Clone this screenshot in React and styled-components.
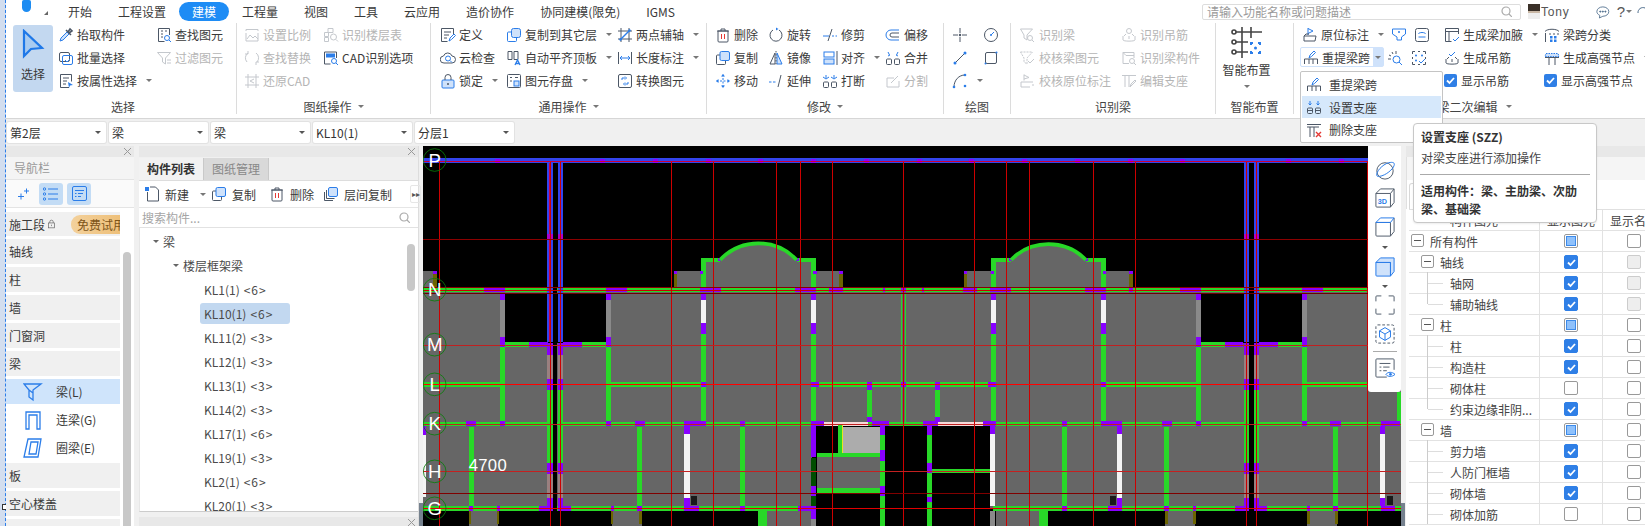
import React from "react";
import styled, { createGlobalStyle } from "styled-components";

const GlobalStyle = createGlobalStyle`
  html, body { margin: 0; padding: 0; background: #f0f0f0; overflow: hidden; }
  body { font-family: "Noto Sans CJK SC", "Liberation Sans", sans-serif; font-size: 12px; color: #3a3a3a; }
  * { box-sizing: border-box; }
`;

/* ---------- icons ---------- */
const Glyph = styled.svg`
  flex: none;
  fill: none;
  stroke: #4c5766;
  stroke-width: 1;
  opacity: ${(p) => (p.$off ? 0.32 : 1)};
  .b { stroke: #2b7de9; }
  .f { stroke: #2b7de9; fill: #cfe2fb; }
  .s { stroke: none; fill: #2b7de9; }
  .d { stroke: none; fill: #4c5766; }
  .r { stroke: #e53935; }
`;

const ICONS = {
  pick: <><path d="M2 14l1-3 6-6 2 2-6 6z" className="f" /><path d="M8 3l5 5M10 5l2-3 2 2-3 2" strokeWidth="1.6" /></>,
  batch: <><rect x="1.5" y="2.5" width="10" height="9" rx="1.5" /><rect x="4.5" y="5.5" width="10" height="9" rx="1.5" className="b" /><path d="M7 10l2 2 3-3" className="b" /></>,
  attr: <><path d="M11 14.5H2.5v-13h11v7" /><path d="M5 5h6M5 8h4M5 11h3" /><path d="M10 9l5 3-3 .6-1 2.4z" className="s" /></>,
  find: <><path d="M13.5 8V1.5h-11v13h6" /><path d="M5 4h2M9 4h2M5 7h2M5 10h2" /><circle cx="11" cy="11" r="2.5" className="b" /><path d="M13 13l2 2" className="b" /></>,
  filter: <><path d="M1.5 2.5h13L9.5 8v6l-3-2V8z" /><path d="M11 10h4M11 13h4" /></>,
  scale: <><path d="M2 4V2.5h12V4M2 14h12M2 6v8M14 6v8" /><path d="M3 12l3-4 3 3 2-2 3 3" /></>,
  floor: <><path d="M5 1.5h5v4H5zM1.5 5.5h4v4h-4zM1.5 10.5h4v4h-4z" /><circle cx="10.5" cy="10" r="3" /><path d="M13 12.5l2 2" /></>,
  replace: <><path d="M4 3a6 6 0 0 0-1 9M12 3a6 6 0 0 1 1 9" /><path d="M4 1v3H1M12 15v-3h3" /></>,
  cad: <><path d="M13.5 8V2h-12v12h6" /><rect x="3" y="3.5" width="9" height="4" className="s" /><circle cx="11" cy="11" r="2.5" className="b" /><path d="M13 13l2 2" className="b" /></>,
  restore: <><path d="M1 4h14M1 12h14M4 1v14M12 1v14" /><path d="M10 6L6 8l4 2" /></>,
  define: <><path d="M13.5 7V1.5h-12v13h6" /><path d="M4 5h7M4 8h5M4 11h3" /><path d="M9 14l1-3 4-4 1.5 1.5-4 4z" className="b" /></>,
  cloud: <><path d="M4 13a3.5 3.5 0 0 1-.5-7 4.5 4.5 0 0 1 8.5 0 3.5 3.5 0 0 1 0 7z" /><circle cx="8" cy="8.5" r="2.5" className="b" /><path d="M10 10.5l2 2" className="b" /></>,
  lock: <><rect x="2" y="7" width="12" height="8" rx="1" className="f" /><path d="M5 7V4.5a3 3 0 0 1 6 0V7" /><circle cx="8" cy="11" r="1" className="d" /></>,
  layer: <><rect x="1.5" y="5" width="9" height="9.5" rx="1" className="b" /><rect x="5.5" y="1.5" width="9" height="9" rx="2" className="f" /></>,
  level: <><path d="M2 1.5h4v8H2zM8 1.5h4v8H8z" /><path d="M9 15l2.5-5 2.500 5M10 13.5h3" className="b" strokeWidth="1.3" /></>,
  save: <><rect x="1.5" y="1.5" width="13" height="13" rx="1" /><path d="M4 4.5h2M9 4.5h3M4 8h2" /><rect x="8" y="8" width="5" height="5" className="f" /></>,
  axis: <><path d="M1 4h14M1 12h14M4 1v14M12 1v14" /><path d="M3 13L13 3" className="b" strokeWidth="1.5" /><circle cx="3.5" cy="12.5" r="1.2" className="s" /><circle cx="12.5" cy="3.5" r="1.2" className="s" /></>,
  dim: <><path d="M1.5 2v12M14.5 2v12" /><path d="M3 8h10M3 8l2-2M3 8l2 2M13 8l-2-2M13 8l-2 2" className="b" /></>,
  convert: <><rect x="1.5" y="1.5" width="13" height="13" rx="1.5" /><path d="M5 7V5h3M8 3.5L9.5 5 8 6.5M11 9v2H8M8 9.5L6.5 11 8 12.5" className="b" /></>,
  trash: <><path d="M3 4h10v10a1 1 0 0 1-1 1H4a1 1 0 0 1-1-1zM2 4h12M6 4V2h4v2" /><path d="M6.5 7v5M9.5 7v5" className="r" /></>,
  copy: <><rect x="1.5" y="5" width="9" height="9.5" rx="1" /><rect x="5" y="1.5" width="9.5" height="9" rx="1.5" className="f" /></>,
  move: <><path d="M8 1.5v13M1.5 8h13" className="b" strokeDasharray="2 1.5" /><path d="M8 1l-2 2.5h4zM8 15l-2-2.5h4zM1 8l2.5-2v4zM15 8l-2.5-2v4z" className="s" /></>,
  rotate: <><path d="M11 3a6 6 0 1 1-6 0" /><path d="M8 .5v3l2.5-1.500z" className="s" /></>,
  mirror: <><path d="M7 3L2 14h5z" /><path d="M9 3l5 11H9z" className="f" /><path d="M8 1v14" strokeDasharray="1.5 1.5" /></>,
  extend: <><path d="M1 9h7" className="b" strokeDasharray="2.5 1.5" /><path d="M13 2L10 14" /></>,
  trim: <><path d="M1 9h6" className="b" /><path d="M10 9h5" className="b" strokeDasharray="2 1.5" /><path d="M10 2L6 14" /></>,
  alignB: <><rect x="2" y="2" width="10" height="5" className="b" /><rect x="2" y="9" width="10" height="5" className="f" /><path d="M15 1v14" /></>,
  breakB: <><rect x="1.5" y="9" width="5" height="5.5" rx="1" /><rect x="9.5" y="9" width="5" height="5.5" rx="1" /><path d="M4 2v3M1 4l3 2 3-2M12 2v3M9 4l3 2 3-2" className="b" /></>,
  offset: <><path d="M14 3H6a5 5 0 0 0 0 10h8" className="b" /><path d="M14 6H7a2 2 0 0 0 0 4h7" /></>,
  merge: <><rect x="1.5" y="9" width="5" height="5.5" rx="1" /><rect x="9.5" y="9" width="5" height="5.5" rx="1" /><path d="M3 2l1.5 3M3 6l2-1M13 2l-1.5 3M13 6l-2-1" className="b" /></>,
  split: <><path d="M14 8v6H2V5h7" /><path d="M6 10l7-7" /></>,
  cross: <><path d="M1 8h5M10 8h5M8 1v5M8 10v5" /><circle cx="8" cy="8" r="1.2" className="d" /></>,
  circle: <><circle cx="8" cy="8" r="6.5" /><path d="M8 8l3-3" className="b" /><circle cx="8" cy="8" r="1" className="s" /></>,
  line: <><path d="M3 13L13 3" /><circle cx="3" cy="13" r="1.5" className="s" /><circle cx="13" cy="3" r="1.5" className="s" /></>,
  rect: <><rect x="2.5" y="2.5" width="11" height="11" rx="1.5" /><circle cx="13.5" cy="2.5" r="1" className="s" /><circle cx="2.5" cy="13.5" r="1" className="s" /></>,
  arc: <><path d="M2 14C2 7 7 2 13 2" /><circle cx="2" cy="14" r="1.3" className="s" /><circle cx="13" cy="2" r="1.3" className="s" /><circle cx="13" cy="13" r="1.3" className="s" /></>,
  idBeam: <><path d="M1.5 2h12L8 8v5L5 11V8z" /><circle cx="11" cy="11" r="2.5" /><path d="M13 13l2 2" /></>,
  chkBeam: <><path d="M1.5 2h12L8 8v6L5 12V8z" strokeDasharray="2 1" /><path d="M9 11l2 2 4-4" /></>,
  chkOrig: <><path d="M5 1.5v6M5 2l5 2.5L5 6" /><path d="M2 9h12M2 9v5h9M13 12h2" /></>,
  idRebar: <><circle cx="8" cy="4" r="2.5" /><path d="M2 9v4c0 1.5 12 1.5 12 0V9M5 7l-2 2M11 7l2 2M8 9v3" /></>,
  idComp: <><path d="M13 8V2.5H2v11h6" /><path d="M2 2.5l3 3h8" /><circle cx="11" cy="11" r="2.5" /><path d="M13 13l2 2" /></>,
  editSup: <><path d="M1 2.5h14M4 2.5V14M8 2.5V14" /><path d="M9 14l1-3 4-4 1 1-4 4z" /></>,
  orig: <><path d="M6 1v7M6 1.5l5 2.5-5 2.5" className="b" /><path d="M2 9h12l-1 5H2z" /><path d="M2 9l2-2h3" /></>,
  funnel: <><path d="M1.5 2h13v5l-4 3v3H6v-3L1.5 7z" className="b" /><circle cx="8" cy="5" r="1" className="s" /></>,
  slotBox: <><rect x="1.5" y="1.5" width="13" height="13" rx="2" /><path d="M4.5 7c0-2 7-2 7 0M4.5 10h7" className="b" /></>,
  reBeam: <><path d="M1.5 15v-5h13v5M6 10v5M10 10v5" /><path d="M6 9l1-3 4-4 1.5 1.5-4 4z" className="b" /></>,
  spark: <><path d="M5 2l1 2M2 5l2 1M1 9h3M9 1v3" /><circle cx="9.5" cy="9.5" r="3.5" className="b" /><path d="M12 12l3 3" className="b" /></>,
  dotBox: <><path d="M4 1.5h-2.500V4M12 1.5h2.500V4M1.5 12v2.500H4M14.5 12v2.500H12M1.5 7v2M14.5 7v2M7 1.5h2M7 14.5h2" /><circle cx="5" cy="5.5" r="1" className="s" /><circle cx="11" cy="5.5" r="1" className="s" /><circle cx="5" cy="10.5" r="1" className="s" /><path d="M8 11l2 2 4-4" className="b" /></>,
  haunch: <><path d="M14.5 7V1.5h-13v13h6" /><path d="M1.5 4.5h13M5 4.5V14" /><path d="M9 12l2 2 4-4" className="b" /></>,
  rebar: <><path d="M2 9v4c0 1.5 12 1.5 12 0V9M5 7l-2 2M11 7l2 2" /><path d="M8 9v3" /><path d="M5 4l2 2 4-4" className="b" /></>,
  classify: <><path d="M1 4.5c2-3 12-3 14 0M1.5 6v9M6 6v2M10 6v2M14 6v2" /><rect x="6" y="9" width="2.5" height="2.5" className="s" /><rect x="10" y="9" width="2.5" height="2.5" className="s" /><rect x="6" y="12.5" width="2.5" height="2.5" className="s" /><rect x="10" y="12.5" width="2.5" height="2.5" className="s" /></>,
  highNode: <><path d="M2 3.5h12l1 3H1z" className="f" strokeDasharray="1.5 1" /><path d="M1 7.5h14M5 7.5V15M11 7.5V15" /></>,
  setSup: <><rect x="1.5" y="9" width="5" height="5.5" rx="1" /><rect x="9.5" y="9" width="5" height="5.5" rx="1" /><path d="M1.5 11.5h5M9.5 11.5h5" /><path d="M4 2v4M2.5 4.5L4 6l1.5-1.500M12 2v4M10.5 4.5L12 6l1.5-1.500" className="b" /></>,
  delSup: <><path d="M1 2.5h14M1 5h12M4 5v10M8 5v10" /><path d="M10 10l5 5M15 10l-5 5" className="r" strokeWidth="1.4" /></>,
  newDoc: <><path d="M3.5 6v9h11V4l-3-3H6" /><rect x="1" y="1" width="4" height="4" className="s" /></>,
  layerCopy: <><path d="M1.5 6v8.500H10" /><path d="M3.5 4v8.500h8" /><rect x="5.5" y="1.5" width="9" height="9" rx="1.5" className="f" /></>,
};

const Icon = ({ n, off, size = 16 }) => (
  <Glyph viewBox="0 0 16 16" width={size} height={size} $off={off}>
    {ICONS[n]}
  </Glyph>
);

const Caret = styled.span`
  display: inline-block;
  flex: none;
  width: 0;
  height: 0;
  margin-left: ${(p) => p.$ml ?? 6}px;
  border-left: 3px solid transparent;
  border-right: 3px solid transparent;
  border-top: 3.5px solid ${(p) => p.$color || "#777"};
`;

const Spacer = styled.i`
  flex: none;
  width: ${(p) => p.$w}px;
`;

/* ---------- shell ---------- */
const Root = styled.div`
  position: relative;
  display: flex;
  width: 1645px;
  height: 526px;
  overflow: hidden;
`;
const EdgeStrip = styled.div`
  flex: none;
  width: 6px;
  background: #d3deef;
  border-right: 1px dashed #2b7de9;
  position: relative;
`;
const Handle = styled.i`
  position: absolute;
  left: 2px;
  top: 504px;
  width: 6px;
  height: 6px;
  background: #fff;
  border: 1px solid #333;
`;
const Main = styled.div`
  flex: 1;
  min-width: 0;
  display: flex;
  flex-direction: column;
`;

/* ---------- tab bar ---------- */
const TabBar = styled.div`
  flex: none;
  height: 21px;
  background: #fff;
  display: flex;
  align-items: flex-end;
`;
const LogoBox = styled.div`
  flex: none;
  align-self: stretch;
  width: 49px;
  padding-left: 16px;
  display: flex;
  align-items: flex-start;
`;
const LogoMark = styled.i`
  display: block;
  width: 9px;
  height: 12px;
  background: #1d8cf2;
  border-radius: 2px 2px 5px 5px;
`;
const MiniCorner = styled.i`
  display: block;
  margin: 11px 0 0 13px;
  width: 0;
  height: 0;
  border-left: 4px solid transparent;
  border-bottom: 4px solid #666;
`;
const Tab = styled.div`
  flex: none;
  padding: 0 13px;
  height: 19px;
  line-height: 19px;
  border-radius: 10px;
  color: ${(p) => (p.$active ? "#fff" : "#3a3a3a")};
  background: ${(p) => (p.$active ? "#1e8cf5" : "transparent")};
  font-size: 12px;
`;
const TopRight = styled.div`
  margin-left: auto;
  width: 443px;
  flex: none;
  align-self: flex-start;
  padding-top: 3px;
  display: flex;
  align-items: center;
`;
const SearchBox = styled.div`
  flex: none;
  width: 319px;
  height: 16px;
  margin-right: 7px;
  border: 1px solid #ddd;
  border-radius: 2px;
  display: flex;
  align-items: center;
  justify-content: space-between;
  padding: 0 8px 0 4px;
  color: #9a9a9a;
  background: #fff;
  font-size: 12px;
`;
const Avatar = styled.i`
  flex: none;
  display: block;
  width: 12px;
  height: 15px;
  background: linear-gradient(#3a3028 0 45%, #c9b8a6 45% 60%, #eee 60%);
`;
const Name = styled.span`
  flex: none;
  width: 56px;
  padding-left: 1px;
  font-family: "Liberation Sans", sans-serif;
  font-size: 12px;
  letter-spacing: 0.8px;
  color: #555;
`;
const Help = styled.span`
  flex: none;
  margin-left: 7px;
  font-family: "Liberation Sans", sans-serif;
  font-size: 15px;
  color: #555;
`;
const EdgeIcon = styled.svg`
  flex: none;
  margin-left: 5px;
`;

/* ---------- ribbon ---------- */
const Ribbon = styled.div`
  flex: none;
  height: 98px;
  background: #fff;
  border-bottom: 1px solid #d6d6d6;
  display: flex;
`;
const Group = styled.div`
  flex: none;
  width: ${(p) => p.$w}px;
  margin: 2px 0 4px;
  border-right: ${(p) => (p.$last ? "none" : "1px solid #dcdcdc")};
  display: flex;
  flex-direction: column;
`;
const GroupBody = styled.div`
  flex: 1;
  display: flex;
  padding-left: ${(p) => p.$pl}px;
`;
const GroupLabel = styled.div`
  flex: none;
  height: 20px;
  padding-top: 4px;
  display: flex;
  align-items: center;
  justify-content: center;
  color: #444;
  padding-left: ${(p) => p.$pl || 0}px;
`;
const Col = styled.div`
  flex: none;
  width: ${(p) => p.$w}px;
  display: flex;
  flex-direction: column;
`;
const Item = styled.div`
  height: 23px;
  display: flex;
  align-items: center;
  gap: ${(p) => (p.$gap === undefined ? 3 : p.$gap)}px;
  white-space: nowrap;
  color: ${(p) => (p.$off ? "#b5b5b5" : "#3a3a3a")};
`;
const SelectBig = styled.div`
  flex: none;
  width: 40px;
  height: 67px;
  margin: 2px 5px 0 0;
  border-radius: 3px;
  background: #c3d8f0;
  display: flex;
  flex-direction: column;
  align-items: center;
  gap: 6px;
  padding-top: 4px;
`;
const BigPlace = styled.div`
  flex: 1;
  display: flex;
  flex-direction: column;
  align-items: center;
  padding: 3px 16px 0 0;
`;
const BigText = styled.div`
  line-height: 18px;
  margin: 2px 0 6px;
`;
const ExtractBtn = styled.div`
  display: flex;
  align-items: center;
  height: 20px;
  width: 84px;
  margin: 1px 0 2px -2px;
  padding-left: 2px;
  gap: 3px;
  border-radius: 2px;
  border: 1px solid #cfe2fb;
  white-space: nowrap;
`;
const ExtractArrow = styled.div`
  margin-left: auto;
  align-self: stretch;
  width: 12px;
  background: #cfe2fb;
  display: flex;
  align-items: center;
  justify-content: center;
`;
const Tick = styled.span`
  flex: none;
  width: 13px;
  height: 13px;
  border-radius: 2px;
  background: #2f7fe6;
  display: flex;
  align-items: center;
  justify-content: center;
`;

const CheckMark = () => (
  <svg width="11" height="11" viewBox="0 0 11 11" fill="none" stroke="#fff" strokeWidth="1.8">
    <path d="M2 5.5l2.5 2.5 4.5-5" />
  </svg>
);

/* ---------- selector row ---------- */
const SelectorRow = styled.div`
  flex: none;
  height: 27px;
  padding: 3px 0 0 1px;
  display: flex;
  gap: 3px;
`;
const SelectBox = styled.div`
  width: 99px;
  height: 21px;
  background: #fff;
  border-radius: 2px;
  display: flex;
  align-items: center;
  justify-content: space-between;
  padding: 0 5px 0 3px;
  color: #333;
  box-shadow: 0 0 0 1px #e2e2e2;
`;

/* ---------- workspace ---------- */
const Workspace = styled.div`
  flex: 1;
  min-height: 0;
  display: flex;
`;
const PanelHead = styled.div`
  flex: none;
  height: 11px;
  background: #e8e8e8;
  display: flex;
  align-items: center;
  justify-content: flex-end;
  padding-right: 3px;
`;
const CloseX = styled.svg`
  width: 7px;
  height: 7px;
  stroke: #999;
  stroke-width: 1;
  fill: none;
`;
const Close = () => (
  <CloseX viewBox="0 0 7 7">
    <path d="M0 0l7 7M7 0L0 7" />
  </CloseX>
);

/* nav */
const NavPanel = styled.div`
  flex: none;
  width: 128px;
  margin-right: 5px;
  display: flex;
  flex-direction: column;
  overflow: hidden;
`;
const NavTitle = styled.div`
  flex: none;
  height: 23px;
  line-height: 21px;
  padding-left: 8px;
  color: #999;
  border-bottom: 1px solid #e4e4e4;
  background: #f4f4f4;
`;
const NavTools = styled.div`
  flex: none;
  height: 28px;
  display: flex;
  align-items: center;
  background: #fafafa;
  border-bottom: 1px solid #e4e4e4;
  padding-left: 8px;
  gap: 4px;
`;
const NavToolBtn = styled.div`
  width: ${(p) => (p.$plain ? 17 : 24)}px;
  height: 22px;
  margin-right: ${(p) => (p.$plain ? 4 : 0)}px;
  border-radius: 3px;
  background: ${(p) => (p.$plain ? "transparent" : "#c3dcf5")};
  display: flex;
  align-items: center;
  justify-content: center;
`;
const NavBody = styled.div`
  flex: 1;
  min-height: 0;
  position: relative;
  padding-top: 4px;
  background: #fff;
  display: flex;
  flex-direction: column;
  gap: 3px;
`;
const NavRow = styled.div`
  flex: none;
  width: 114px;
  height: ${(p) => (p.$first ? 24 : 25)}px;
  display: flex;
  align-items: center;
  white-space: nowrap;
  overflow: hidden;
  padding-left: ${(p) => (p.$sub ? 17 : 3)}px;
  gap: ${(p) => (p.$sub ? 13 : 3)}px;
  background: ${(p) => (p.$sub ? (p.$active ? "#cfe4fb" : "#fff") : "#f0f0f0")};
`;
const FreeBadge = styled.span`
  flex: none;
  margin-left: 13px;
  padding: 0 0 0 6px;
  width: 49px;
  height: 19px;
  line-height: 19px;
  border-radius: 9px 0 0 9px;
  background: linear-gradient(90deg, #f3d19c, #eec07a);
  color: #7d5418;
  overflow: hidden;
`;
const NavScroll = styled.i`
  position: absolute;
  right: 3px;
  top: 44px;
  bottom: -20px;
  width: 8px;
  border-radius: 4px;
  background: #c8c8c8;
`;

/* list panel */
const ListPanel = styled.div`
  flex: none;
  width: 280px;
  margin-right: 4px;
  display: flex;
  flex-direction: column;
  border-right: 1px solid #ddd;
`;
const ListTabs = styled.div`
  flex: none;
  height: 24px;
  display: flex;
  padding-top: 1px;
  background: #f0f0f0;
  border-bottom: 1px solid #ddd;
`;
const ListTab = styled.div`
  width: ${(p) => p.$w}px;
  display: flex;
  align-items: center;
  justify-content: center;
  padding-bottom: 2px;
  font-weight: ${(p) => (p.$active ? 700 : 400)};
  color: ${(p) => (p.$active ? "#333" : "#888")};
  background: ${(p) => (p.$active ? "#f2f2f2" : "#d9d9d9")};
  border-right: 1px solid #c9c9c9;
`;
const ListTools = styled.div`
  flex: none;
  height: 27px;
  background: #fff;
  display: flex;
  align-items: center;
  padding-left: 5px;
  border-bottom: 1px solid #e6e6e6;
`;
const ToolBtn = styled.div`
  flex: none;
  width: ${(p) => p.$w}px;
  display: flex;
  align-items: center;
  gap: 5px;
`;
const MoreBtn = styled.div`
  flex: none;
  width: 11px;
  height: 18px;
  margin-left: 3px;
  border-radius: 2px;
  border: 1px solid #e6e6e6;
  font-size: 8px;
  line-height: 16px;
  text-align: center;
  color: #555;
`;
const ListSearch = styled.div`
  flex: none;
  height: 20px;
  background: #fff;
  display: flex;
  align-items: center;
  justify-content: space-between;
  padding: 0 8px 0 3px;
  color: #a5a5a5;
  border-bottom: 1px solid #e2e2e2;
`;
const TreeBox = styled.div`
  flex: none;
  height: 284px;
  position: relative;
  overflow: hidden;
  padding-top: 1px;
  background: #fff;
  border-bottom: 1px solid #ccc;
  border-left: 1px solid #e6e6e6;
`;
const TreeRow = styled.div`
  height: 24px;
  display: flex;
  align-items: center;
  padding-left: ${(p) => p.$pl}px;
  gap: 4px;
  color: #4a4a4a;
`;
const TreeCount = styled.span`
  margin-left: 4px;
  letter-spacing: 1px;
`;
const KlChip = styled.span`
  display: inline-flex;
  align-items: center;
  height: 21px;
  margin-left: -4px;
  padding: 0 ${(p) => (p.$on ? 17 : 4)}px 0 4px;
  border-radius: 3px;
  background: ${(p) => (p.$on ? "#c2d8f0" : "transparent")};
`;
const TreeScroll = styled.i`
  position: absolute;
  right: 3px;
  top: 16px;
  width: 8px;
  height: 47px;
  border-radius: 4px;
  background: #c8c8c8;
`;
const ListFoot = styled.div`
  flex: none;
  margin-top: 5px;
`;

/* canvas */
const CanvasBox = styled.div`
  flex: none;
  width: 978px;
  height: 380px;
  margin-right: 5px;
  position: relative;
  background: #000;
  &::before,
  &::after {
    content: "";
    position: absolute;
    top: 357px;
    bottom: 0;
    width: 4px;
    background: #75818e;
  }
  &::before { left: -4px; }
  &::after { right: -4px; }
`;
const Drawing = styled.svg`
  display: block;
  shape-rendering: crispEdges;
  font-family: "Liberation Sans", sans-serif;
`;
const Palette = styled.div`
  position: absolute;
  right: 0;
  top: 0;
  width: 33px;
  height: 246px;
  background: #fff;
  border-radius: 0 0 3px 3px;
  display: flex;
  flex-direction: column;
  align-items: center;
  padding-top: 14px;
`;
const PaletteIcon = styled.svg`
  flex: none;
  display: block;
  margin-bottom: ${(p) => p.$mb || 0}px;
  fill: none;
  stroke: #55606e;
  stroke-width: 1.1;
  .b { stroke: #2b7de9; }
  .f { stroke: #2b7de9; fill: #cfe2fb; }
  .e { stroke: #2b7de9; }
`;
const PaletteCaret = styled.div`
  flex: none;
  height: ${(p) => p.$h}px;
  display: flex;
  align-items: center;
`;
const PaletteRule = styled.div`
  flex: none;
  width: 24px;
  height: 1px;
  background: #aaa;
  margin: 7px 0 6px;
`;

/* right panel */
const RightPanel = styled.div`
  flex: 1;
  min-width: 0;
  display: flex;
  flex-direction: column;
  background: #fff;
`;
const RightTop = styled.div`
  flex: none;
  height: 52px;
  padding: 26px 0 0 2px;
  background: linear-gradient(#f5f5f5 0 23px, #fff 23px);
  border-left: 1px solid #e0e0e0;
`;
const RightTabEdge = styled.div`
  width: 60px;
  height: 26px;
  border: 1px solid #d8d8d8;
  border-bottom: none;
  border-radius: 3px 0 0 0;
`;
const VisTable = styled.div`
  flex: 1;
  min-height: 0;
  overflow: hidden;
  margin-left: 3px;
  border-top: 1px solid #e0e0e0;
`;
const VisRow = styled.div`
  display: grid;
  grid-template-columns: 131px 63px 63px;
  height: 21px;
  border-bottom: 1px solid #e2e2e2;
`;
const VisName = styled.div`
  position: relative;
  display: flex;
  align-items: center;
  padding-left: ${(p) => 21 + p.$depth * 10}px;
  border-right: 1px solid #e2e2e2;
  white-space: nowrap;
  color: #444;
`;
const VisCell = styled.div`
  display: flex;
  align-items: center;
  justify-content: center;
  border-right: 1px solid #e2e2e2;
  color: #444;
  white-space: nowrap;
`;
const Toggle = styled.i`
  position: absolute;
  left: ${(p) => 2 + p.$depth * 10}px;
  top: 3px;
  width: 13px;
  height: 13px;
  border: 1px solid #999;
  border-radius: 2px;
  background: #fff;
  &::after {
    content: "";
    position: absolute;
    left: 2px;
    right: 2px;
    top: 5px;
    height: 1px;
    background: #555;
  }
`;
const Branch = styled.i`
  position: absolute;
  left: 18px;
  top: -1px;
  width: 16px;
  height: ${(p) => (p.$last ? 11 : 21)}px;
  border-left: 1px solid #ccc;
  &::after {
    content: "";
    position: absolute;
    left: 0;
    right: 0;
    top: 11px;
    border-top: 1px solid #ddd;
  }
`;
const Box = styled.span`
  width: 14px;
  height: 14px;
  border-radius: 2px;
  display: flex;
  align-items: center;
  justify-content: center;
  border: 1px solid ${(p) => (p.$k === "check" ? "#2f7fe6" : "#999")};
  background: ${(p) => (p.$k === "check" ? "#2f7fe6" : p.$k === "dis" ? "#eee" : "#fff")};
  ${(p) => p.$k === "dis" && "border-color: #ccc;"}
`;
const BoxFill = styled.i`
  width: 10px;
  height: 10px;
  background: #8fc1fb;
  border: 1px solid #3d8bea;
`;
const CheckCell = ({ k }) => (
  <VisCell>
    <Box $k={k}>
      {k === "check" && <CheckMark />}
      {k === "partial" && <BoxFill />}
    </Box>
  </VisCell>
);

/* overlays */
const Menu = styled.div`
  position: absolute;
  left: 1300px;
  top: 71px;
  width: 143px;
  height: 72px;
  background: #fff;
  border: 1px solid #c4c4c4;
  border-radius: 2px;
  padding: 1px;
  display: flex;
  flex-direction: column;
`;
const MenuItem = styled.div`
  flex: 1;
  display: flex;
  align-items: center;
  gap: 7px;
  padding-left: 4px;
  background: ${(p) => (p.$on ? "#d6e8fb" : "transparent")};
`;
const Tooltip = styled.div`
  position: absolute;
  left: 1413px;
  top: 123px;
  width: 184px;
  height: 100px;
  background: #fff;
  border: 1px solid #c8c8c8;
  border-radius: 4px;
  padding: 4px 6px 0 6px;
  box-shadow: 0 1px 2px rgba(0, 0, 0, 0.08);
`;
const TipTitle = styled.div`
  font-weight: 700;
  line-height: 18px;
  color: #333;
  padding-left: 1px;
`;
const TipText = styled.div`
  line-height: 18px;
  margin-top: 3px;
  padding-left: 1px;
  color: #444;
`;
const TipRule = styled.div`
  height: 1px;
  background: #aaa;
  margin: 7px 0 7px;
`;
const TipBold = styled.div`
  font-weight: 700;
  line-height: 17.5px;
  color: #333;
  padding-left: 1px;
`;

/* ---------- drawing data, in 3x page units ---------- */
const W = 3000;
const GRAY = "#666666";
const GREEN = "#28d828";
const PUR = "#8800ff";
const BLUE = "#3344ee";
const WHITE = "#f4f4f4";
const STEEL = "#8a8a8a";
const OLIVE = "#6b6400";

const rects = [];
const r = (x, y, w, h, c) => rects.push([x, y, w, h, c]);

// floor fills
[[9, 393, 41, 55], [762, 393, 80, 55], [842, 360, 346, 88], [1188, 393, 80, 55], [1632, 393, 80, 55], [1712, 360, 346, 88], [2058, 393, 80, 55]].forEach(([x, y, w, h]) => r(x, y, w, h, GRAY));
r(9, 448, W, 402, GRAY);
r(255, 458, 302, 150, "#000");
r(2343, 458, 302, 150, "#000");
r(9, 850, 1166, 255, GRAY);
r(1710, 850, W, 255, GRAY);
r(1190, 940, 190, 110, GRAY);
r(1265, 860, 115, 80, "#acacac");
[[148, 87], [575, 90], [1040, 135], [1728, 132], [2235, 90], [2662, 90]].forEach(([x, w]) => r(x, 1112, w, 46, GRAY));

// horizontal walls
r(9, 444, W, 12, GREEN);
r(9, 845, W, 13, GREEN);
r(9, 1098, 1166, 14, GREEN);
r(1720, 1098, W, 14, GREEN);
[[255, 130], [430, 127], [2343, 127], [2518, 127]].forEach(([x, w]) => r(x, 607, w, 15, GREEN));
[[9, 231], [572, 270], [1188, 257], [1450, 262], [2058, 272], [2660, 340]].forEach(([x, w]) => r(x, 727, w, 13, GREEN));
[[842, 58], [1130, 58], [1712, 61], [1998, 60]].forEach(([x, w]) => r(x, 354, w, 11, GREEN));
r(1213, 845, 130, 14, "#f6d8d8");
r(1553, 845, 135, 14, "#f6d8d8");
r(1190, 938, 190, 14, GREEN);
r(1190, 1045, 190, 13, GREEN);
r(1537, 987, 181, 13, GREEN);

// top band
r(9, 55, W, 13, BLUE);

// tall walls with opening
[240, 557, 2328, 2645].forEach((x) => {
  r(x, 458, 15, 22, PUR);
  r(x, 480, 15, 110, STEEL);
  r(x, 590, 15, 32, PUR);
  r(x, 622, 15, 223, GREEN);
});
[842, 1173, 1712, 2043].forEach((x) => {
  r(x, 360, 15, 84, GREEN);
  r(x, 458, 15, 22, PUR);
  r(x, 480, 15, 70, WHITE);
  r(x, 550, 15, 33, PUR);
  r(x, 583, 15, 262, GREEN);
});
[1340, 1545].forEach((x) => {
  r(x, 750, 15, 80, GREEN);
  r(x, 725, 15, 25, PUR);
  r(x, 830, 15, 15, PUR);
});
r(1443, 458, 3, 387, GREEN);
r(1455, 458, 3, 387, GREEN);
r(2932, 755, 10, 90, GREEN);

// lower walls
[146, 651, 960, 1925, 2233, 2740].forEach((x) => r(x, 862, 15, 236, GREEN));
[793, 2090, 2880].forEach((x) => {
  r(x, 858, 16, 24, PUR);
  r(x, 882, 16, 192, WHITE);
  r(x, 1074, 16, 24, PUR);
});
r(1710, 858, 16, 24, PUR);
r(1710, 882, 16, 216, WHITE);
r(1710, 1112, 16, 46, STEEL);
r(9, 885, 8, 185, WHITE);
r(9, 858, 8, 26, PUR);
r(1380, 885, 15, 273, GREEN);
r(1380, 858, 15, 27, PUR);
r(1380, 930, 15, 33, PUR);
r(1380, 1038, 15, 30, PUR);
r(1173, 858, 15, 92, PUR);
r(1173, 953, 15, 85, "#004d00");
r(1173, 1038, 15, 30, PUR);
r(1173, 1068, 15, 30, "#004d00");
r(1173, 1112, 15, 24, PUR);
r(1173, 1136, 15, 22, STEEL);
r(1522, 858, 15, 300, GREEN);
r(1522, 858, 15, 26, PUR);
r(1522, 970, 15, 30, PUR);
r(1522, 1070, 15, 15, PUR);
r(1253, 852, 12, 88, GREEN);
r(1265, 852, 3, 88, "#e6e620");
r(1015, 1112, 26, 46, GREEN);
r(1857, 1112, 28, 46, GREEN);

// paired columns
[382, 414, 2471, 2502].forEach((x) => {
  r(x, 68, 16, 539, BLUE);
  r(x + 6, 68, 3, 539, "#cc0044");
  r(x, 283, 16, 16, "#aa00cc");
  r(x, 622, 16, 483, GREEN);
  r(x, 645, 16, 75, "#9a8080");
  r(x, 1003, 16, 72, "#9a8080");
  r(x, 608, 16, 37, PUR);
  r(x, 718, 16, 32, PUR);
  r(x, 970, 16, 33, PUR);
  r(x, 1075, 16, 30, PUR);
});
r(400, 68, 12, 1090, "#000");
r(2488, 68, 13, 1090, "#000");

// purple joints
const joints = (y, h, list) => list.forEach(([a, b]) => r(a, y, b - a, h, PUR));
joints(442, 15, [[192, 255], [557, 620], [840, 904], [1126, 1188], [1228, 1268], [1388, 1396], [1443, 1457], [1505, 1513], [1630, 1672], [1710, 1773], [1995, 2058], [2128, 2138], [2280, 2343], [2645, 2708]]);
joints(607, 15, [[328, 385], [430, 485], [2415, 2470], [2518, 2573]]);
joints(726, 14, [[842, 857], [1173, 1197], [1340, 1355], [1443, 1457], [1704, 1727], [2043, 2058]]);
joints(844, 15, [[138, 168], [240, 255], [557, 572], [645, 675], [793, 857], [960, 975], [1173, 1213], [1355, 1407], [1508, 1553], [1688, 1727], [1925, 1940], [2043, 2106], [2225, 2255], [2328, 2343], [2645, 2660], [2730, 2762], [2882, 2940]]);
joints(1098, 14, [[146, 160], [230, 240], [358, 398], [414, 453], [572, 582], [651, 666], [793, 837], [960, 975], [1135, 1188], [1925, 1940], [2064, 2106], [2233, 2248], [2318, 2328], [2446, 2487], [2502, 2540], [2660, 2670], [2740, 2755], [2882, 2925]]);
joints(56, 12, [[225, 240], [541, 556], [699, 714], [857, 872], [1015, 1030], [1174, 1189], [1332, 1347], [1490, 1505], [1648, 1663], [1806, 1821], [1964, 1979], [2123, 2138], [2280, 2295], [2598, 2613], [2756, 2771]]);
[[40, 393], [840, 393], [894, 354], [1126, 354], [1180, 393], [762, 393], [1258, 393], [1632, 393], [1712, 393], [1768, 354], [1995, 354], [2048, 393], [2128, 393]].forEach(([x, y]) => r(x, y, 10, 10, PUR));

// olive stubs and dark blocks
[[40, 403], [762, 403], [1258, 403], [1632, 403], [2128, 403]].forEach(([x, y]) => r(x, y, 10, 38, OLIVE));
[146, 230, 572, 658, 2235, 2320, 2662, 2745].forEach((x) => r(x, 1112, 8, 40, OLIVE));
[812, 2070, 2900].forEach((x) => r(x, 1068, 19, 26, "#1a1a1a"));

const vLines = [58, 390, 421, 754, 880, 1069, 1141, 1237, 1450, 1663, 1759, 1828, 2019, 2145, 2479, 2509, 2841];
const hLines = [[62, "#cc0033"], [298, "#8b0000"], [441, "#8b0000"], [450, "#cc0000"], [458, "#700000"], [614, "#c02020"], [733, "#ff0000"], [851, "#c02020"], [994, "#c42020"], [1060, "#800000"], [1105, "#e00000"]];
const axes = [["P", 60], ["N", 449], ["M", 614], ["L", 733], ["K", 851], ["H", 994], ["G", 1105]];

const Plan = () => (
  <Drawing width="978" height="380" viewBox="9 18 2934 1140">
    <rect x="9" y="18" width="2934" height="1140" fill="#000" />
    <path d="M900 360A157 157 0 0 1 1130 360Z" fill={GRAY} />
    <path d="M1773 360A157 157 0 0 1 1998 360Z" fill={GRAY} />
    {rects.map(([x, y, w, h, c], i) => (
      <rect key={i} x={x} y={y} width={w} height={h} fill={c} />
    ))}
    <g shapeRendering="geometricPrecision" fill="none" stroke={GREEN} strokeWidth="11">
      <path d="M900 360A157 157 0 0 1 1130 360" />
      <path d="M1773 360A157 157 0 0 1 1998 360" />
    </g>
    {vLines.map((x) => (
      <rect key={x} x={x} y="62" width="3" height="1096" fill="#cc0000" />
    ))}
    {hLines.map(([y, c]) => (
      <rect key={y} x="9" y={y} width="2934" height="3" fill={c} />
    ))}
    <g shapeRendering="geometricPrecision">
      {axes.map(([t, y]) => (
        <g key={t}>
          <circle cx="44" cy={y} r="34" fill="none" stroke="#0a7d0a" strokeWidth="2.5" />
          <text x="44" y={y + 20} fill="#fff" fontSize="56" textAnchor="middle">{t}</text>
        </g>
      ))}
      <text x="146" y="994" fill="#fff" fontSize="50" letterSpacing="1">4700</text>
    </g>
  </Drawing>
);

const tabs = ["开始", "工程设置", "建模", "工程量", "视图", "工具", "云应用", "造价协作", "协同建模(限免)", "IGMS"];
const navTop = ["轴线", "柱", "墙", "门窗洞", "梁"];
const kl = [["KL1(1)", 6], ["KL10(1)", 6], ["KL11(2)", 3], ["KL12(1)", 3], ["KL13(1)", 3], ["KL14(2)", 3], ["KL17(1)", 6], ["KL19(1)", 3], ["KL2(1)", 6], ["KL20(1)", 3]];
const vis = [
  ["所有构件", 0, "toggle", "partial", "empty"],
  ["轴线", 1, "toggle", "check", "dis"],
  ["轴网", 2, "mid", "check", "dis"],
  ["辅助轴线", 2, "end", "check", "dis"],
  ["柱", 1, "toggle", "partial", "empty"],
  ["柱", 2, "mid", "check", "empty"],
  ["构造柱", 2, "mid", "check", "empty"],
  ["砌体柱", 2, "mid", "empty", "empty"],
  ["约束边缘非阴...", 2, "end", "check", "empty"],
  ["墙", 1, "toggle", "partial", "empty"],
  ["剪力墙", 2, "mid", "check", "empty"],
  ["人防门框墙", 2, "mid", "check", "empty"],
  ["砌体墙", 2, "mid", "check", "empty"],
  ["砌体加筋", 2, "mid", "empty", "empty"],
];

const Tool = ({ n, off, caret, children, gap }) => (
  <Item $off={off} $gap={gap}>
    {n && <Icon n={n} off={off} />}
    {children}
    {caret && <Caret />}
  </Item>
);

const App = () => (
  <Root>
    <GlobalStyle />
    <EdgeStrip>
      <Handle />
    </EdgeStrip>
    <Main>
      <TabBar>
        <LogoBox>
          <LogoMark />
          <MiniCorner />
        </LogoBox>
        {tabs.map((t) => (
          <Tab key={t} $active={t === "建模"}>
            {t}
          </Tab>
        ))}
        <TopRight>
          <SearchBox>
            请输入功能名称或问题描述
            <svg width="11" height="11" viewBox="0 0 11 11" fill="none" stroke="#aaa" strokeWidth="1.2">
              <circle cx="5" cy="5" r="4" />
              <path d="M8 8l3 3" />
            </svg>
          </SearchBox>
          <Avatar />
          <Name>Tony</Name>
          <svg width="16" height="16" viewBox="0 0 16 16" fill="none" stroke="#4a6a8a">
            <path d="M8 2c4 0 7 2.5 7 5.5S12 13 8 13l-4 2 .5-3C2.500 11 1 9.500 1 7.500 1 4.500 4 2 8 2z" />
            <circle cx="5" cy="7.5" r=".7" fill="#4a6a8a" />
            <circle cx="8" cy="7.5" r=".7" fill="#4a6a8a" />
            <circle cx="11" cy="7.5" r=".7" fill="#4a6a8a" />
          </svg>
          <Help>?</Help>
          <Caret $ml={1} />
          <EdgeIcon width="8" height="14" viewBox="0 0 8 14" fill="none" stroke="#4a6a8a">
            <path d="M1 8a5 5 0 0 1 7-5" />
          </EdgeIcon>
        </TopRight>
      </TabBar>

      <Ribbon>
        <Group $w={231}>
          <GroupBody $pl={7}>
            <SelectBig>
              <svg width="24" height="30" viewBox="0 0 24 30" fill="none" stroke="#1f78e8" strokeWidth="2.2">
                <path d="M3 2v25l7-7 11-1z" fill="#a9cbf0" />
              </svg>
              选择
            </SelectBig>
            <Col $w={98}>
              <Tool n="pick">抬取构件</Tool>
              <Tool n="batch">批量选择</Tool>
              <Tool n="attr" caret>按属性选择</Tool>
            </Col>
            <Col $w={80}>
              <Tool n="find">查找图元</Tool>
              <Tool n="filter" off>过滤图元</Tool>
            </Col>
          </GroupBody>
          <GroupLabel $pl={4}>选择</GroupLabel>
        </Group>

        <Group $w={194}>
          <GroupBody $pl={7}>
            <Col $w={79}>
              <Tool n="scale" off>设置比例</Tool>
              <Tool n="replace" off>查找替换</Tool>
              <Tool n="restore" off>还原CAD</Tool>
            </Col>
            <Col $w={100}>
              <Tool n="floor" off>识别楼层表</Tool>
              <Tool n="cad">CAD识别选项</Tool>
            </Col>
          </GroupBody>
          <GroupLabel>图纸操作<Caret /></GroupLabel>
        </Group>

        <Group $w={276}>
          <GroupBody $pl={9}>
            <Col $w={66}>
              <Tool n="define">定义</Tool>
              <Tool n="cloud">云检查</Tool>
              <Tool n="lock" caret>锁定</Tool>
            </Col>
            <Col $w={111}>
              <Tool n="layer" caret>复制到其它层</Tool>
              <Tool n="level" caret>自动平齐顶板</Tool>
              <Tool n="save" caret>图元存盘</Tool>
            </Col>
            <Col $w={80}>
              <Tool n="axis" caret>两点辅轴</Tool>
              <Tool n="dim" caret>长度标注</Tool>
              <Tool n="convert">转换图元</Tool>
            </Col>
          </GroupBody>
          <GroupLabel>通用操作<Caret /></GroupLabel>
        </Group>

        <Group $w={237}>
          <GroupBody $pl={8}>
            <Col $w={53}>
              <Tool n="trash">删除</Tool>
              <Tool n="copy">复制</Tool>
              <Tool n="move">移动</Tool>
            </Col>
            <Col $w={54}>
              <Tool n="rotate">旋转</Tool>
              <Tool n="mirror">镜像</Tool>
              <Tool n="extend">延伸</Tool>
            </Col>
            <Col $w={63}>
              <Tool n="trim">修剪</Tool>
              <Tool n="alignB" caret>对齐</Tool>
              <Tool n="breakB">打断</Tool>
            </Col>
            <Col $w={50}>
              <Tool n="offset">偏移</Tool>
              <Tool n="merge">合并</Tool>
              <Tool n="split" off>分割</Tool>
            </Col>
          </GroupBody>
          <GroupLabel>修改<Caret /></GroupLabel>
        </Group>

        <Group $w={67}>
          <GroupBody $pl={8}>
            <Col $w={31}>
              <Tool n="cross" />
              <Tool n="line" />
              <Tool n="arc" caret />
            </Col>
            <Col $w={20}>
              <Tool n="circle" />
              <Tool n="rect" />
            </Col>
          </GroupBody>
          <GroupLabel>绘图</GroupLabel>
        </Group>

        <Group $w={205}>
          <GroupBody $pl={8}>
            <Col $w={102}>
              <Tool n="idBeam" off gap={4}>识别梁</Tool>
              <Tool n="chkBeam" off gap={4}>校核梁图元</Tool>
              <Tool n="chkOrig" off gap={4}>校核原位标注</Tool>
            </Col>
            <Col $w={85}>
              <Tool n="idRebar" off>识别吊筋</Tool>
              <Tool n="idComp" off>识别梁构件</Tool>
              <Tool n="editSup" off>编辑支座</Tool>
            </Col>
          </GroupBody>
          <GroupLabel>识别梁</GroupLabel>
        </Group>

        <Group $w={78}>
          <BigPlace>
            <svg width="32" height="33" viewBox="0 0 32 33" fill="none" stroke="#444" strokeWidth="1.6">
              <path d="M5 6h26M5 16h12M5 26h12M11 1v31M20 1v11" />
              <circle cx="3" cy="6" r="2" />
              <circle cx="3" cy="16" r="2" />
              <circle cx="3" cy="26" r="2" />
              <path d="M22 17h-2v2M27 17h2v2M20 25v2h2M29 25v2h-2" stroke="#2b7de9" strokeWidth="2" />
              <circle cx="24.5" cy="22" r="1.5" fill="#2b7de9" stroke="none" />
            </svg>
            <BigText>智能布置</BigText>
            <Caret $ml={0} />
          </BigPlace>
          <GroupLabel>智能布置</GroupLabel>
        </Group>

        <Group $w={351} $last>
          <GroupBody $pl={8}>
            <Col $w={142}>
              <Item>
                <Icon n="orig" />
                原位标注
                <Caret />
                <Spacer $w={1} />
                <Icon n="funnel" />
                <Spacer $w={1} />
                <Icon n="slotBox" />
              </Item>
              <Item>
                <ExtractBtn>
                  <Icon n="reBeam" />
                  重提梁跨
                  <ExtractArrow><Caret $ml={0} /></ExtractArrow>
                </ExtractBtn>
                <Icon n="spark" />
                <Spacer $w={2} />
                <Icon n="dotBox" />
              </Item>
            </Col>
            <Col $w={100}>
              <Tool n="haunch" caret>生成梁加腋</Tool>
              <Tool n="rebar">生成吊筋</Tool>
              <Item $gap={4}><Tick><CheckMark /></Tick>显示吊筋</Item>
            </Col>
            <Col $w={100}>
              <Tool n="classify">梁跨分类</Tool>
              <Tool n="highNode" caret>生成高强节点</Tool>
              <Item $gap={4}><Tick><CheckMark /></Tick>显示高强节点</Item>
            </Col>
          </GroupBody>
          <GroupLabel $pl={10}>梁二次编辑<Caret $ml={8} /></GroupLabel>
        </Group>
      </Ribbon>

      <SelectorRow>
        {["第2层", "梁", "梁", "KL10(1)", "分层1"].map((t, i) => (
          <SelectBox key={i}>
            {t}
            <Caret $color="#555" />
          </SelectBox>
        ))}
      </SelectorRow>

      <Workspace>
        <NavPanel>
          <PanelHead><Close /></PanelHead>
          <NavTitle>导航栏</NavTitle>
          <NavTools>
            <NavToolBtn $plain>
              <svg width="12" height="12" viewBox="0 0 12 12" fill="none" stroke="#2b7de9">
                <path d="M1 8.5h6M4 5.5v6M7 3h5M9.5 .5v5" />
              </svg>
            </NavToolBtn>
            <NavToolBtn>
              <svg width="16" height="14" viewBox="0 0 16 14" fill="none" stroke="#2b7de9">
                <path d="M5 2h10M5 7h10M5 12h10" />
                <circle cx="1.5" cy="2" r="1.2" />
                <circle cx="1.5" cy="7" r="1.2" />
                <circle cx="1.5" cy="12" r="1.2" />
              </svg>
            </NavToolBtn>
            <NavToolBtn>
              <svg width="15" height="15" viewBox="0 0 15 15" fill="none" stroke="#2b7de9">
                <rect x=".5" y=".5" width="14" height="14" rx="1.5" />
                <path d="M3 4.5h9M3 7.5h1.5M6 7.5h5M3 10.5h1.5M6 10.5h3" />
              </svg>
            </NavToolBtn>
          </NavTools>
          <NavBody>
            <NavRow $first>
              施工段
              <svg width="10" height="12" viewBox="0 0 10 12" fill="none" stroke="#666">
                <rect x=".5" y="4.5" width="9" height="7" />
                <path d="M2.5 4.5V3a2.500 2.500 0 0 1 5 0v1.500M5 7v2" />
              </svg>
              <FreeBadge>免费试用</FreeBadge>
            </NavRow>
            {navTop.map((t) => (
              <NavRow key={t}>{t}</NavRow>
            ))}
            <NavRow $sub $active>
              <svg width="20" height="20" viewBox="0 0 20 20" fill="none" stroke="#2b7de9" strokeWidth="1.3">
                <path d="M1 2h17l-8 6v10l-4-3V8zM10 8l8-6M6 8l4 3" />
              </svg>
              梁(L)
            </NavRow>
            <NavRow $sub>
              <svg width="20" height="20" viewBox="0 0 20 20" fill="none" stroke="#2b7de9" strokeWidth="1.3">
                <path d="M3 19V2h14v17h-3V5H6v14z" />
              </svg>
              连梁(G)
            </NavRow>
            <NavRow $sub>
              <svg width="20" height="20" viewBox="0 0 20 20" fill="none" stroke="#2b7de9" strokeWidth="1.3">
                <path d="M5 1h13l-3 18H1zM8 4h7l-2 12H6z" />
              </svg>
              圈梁(E)
            </NavRow>
            <NavRow>板</NavRow>
            <NavRow>空心楼盖</NavRow>
            <NavRow />
            <NavScroll />
          </NavBody>
        </NavPanel>

        <ListPanel>
          <PanelHead><Close /></PanelHead>
          <ListTabs>
            <ListTab $w={65} $active>构件列表</ListTab>
            <ListTab $w={65}>图纸管理</ListTab>
          </ListTabs>
          <ListTools>
            <ToolBtn $w={67}><Icon n="newDoc" />新建<Caret /></ToolBtn>
            <ToolBtn $w={58}><Icon n="copy" />复制</ToolBtn>
            <ToolBtn $w={54}><Icon n="trash" />删除</ToolBtn>
            <ToolBtn $w={84}><Icon n="layerCopy" />层间复制</ToolBtn>
            <MoreBtn>▸▸</MoreBtn>
          </ListTools>
          <ListSearch>
            搜索构件...
            <svg width="11" height="11" viewBox="0 0 11 11" fill="none" stroke="#aaa" strokeWidth="1.2">
              <circle cx="5" cy="5" r="4" />
              <path d="M8 8l3 3" />
            </svg>
          </ListSearch>
          <TreeBox>
            <TreeRow $pl={13}><Caret $ml={0} $color="#666" />梁</TreeRow>
            <TreeRow $pl={33}><Caret $ml={0} $color="#666" />楼层框架梁</TreeRow>
            {kl.map(([t, c]) => (
              <TreeRow key={t} $pl={64}>
                <KlChip $on={t === "KL10(1)"}>
                  {t}
                  <TreeCount>{`<${c}>`}</TreeCount>
                </KlChip>
              </TreeRow>
            ))}
            <TreeScroll />
          </TreeBox>
          <ListFoot>
            <PanelHead><Close /></PanelHead>
          </ListFoot>
        </ListPanel>

        <CanvasBox>
          <Plan />
          <Palette>
            <PaletteIcon width="20" height="20" viewBox="0 0 22 22" $mb={8}>
              <circle cx="11" cy="12" r="9" />
              <path className="e" d="M2 17C1 13 8 5 15 3c5-1 7 0 6 3-1 4-9 11-16 12-2 0-3 0-3-1z" />
            </PaletteIcon>
            <PaletteIcon width="20" height="20" viewBox="0 0 22 22" $mb={9}>
              <path d="M1 6h16v15H2a1 1 0 0 1-1-1zM1 6l5-5h15v15l-4 5M17 6l4-5" />
              <text x="3" y="18" fontSize="8" fontWeight="700" fill="#2b7de9" stroke="none" fontFamily="Liberation Sans, sans-serif">3D</text>
            </PaletteIcon>
            <PaletteIcon width="20" height="20" viewBox="0 0 22 22">
              <path d="M1 6v14a1 1 0 0 0 1 1h15V6zM17 21l4-5V1" />
              <path className="b" d="M1 6l5-5h15l-4 5z" />
            </PaletteIcon>
            <PaletteCaret $h={20}><Caret $ml={0} $color="#555" /></PaletteCaret>
            <PaletteIcon width="20" height="20" viewBox="0 0 22 22">
              <path className="f" d="M1 6h16v15H2a1 1 0 0 1-1-1zM1 6l5-5h15v15l-4 5V6z" />
            </PaletteIcon>
            <PaletteCaret $h={18}><Caret $ml={0} $color="#555" /></PaletteCaret>
            <PaletteIcon width="20" height="20" viewBox="0 0 22 22" $mb={9}>
              <path d="M1 7V2a1 1 0 0 1 1-1h5M15 1h5a1 1 0 0 1 1 1v5M21 15v5a1 1 0 0 1-1 1h-5M7 21H2a1 1 0 0 1-1-1v-5" />
            </PaletteIcon>
            <PaletteIcon width="20" height="20" viewBox="0 0 22 22">
              <rect x="1" y="1" width="20" height="20" rx="2" strokeDasharray="3 2" />
              <path className="b" d="M11 4l6 3.5v7L11 18l-6-3.500v-7zM5 7.500l6 3.500 6-3.500M11 11v7" />
            </PaletteIcon>
            <PaletteRule />
            <PaletteIcon width="20" height="20" viewBox="0 0 22 22">
              <path d="M13 21H2a1 1 0 0 1-1-1V2a1 1 0 0 1 1-1h18a1 1 0 0 1 1 1v11" />
              <path d="M5 6h12M5 10h2M9 10h7M5 14h2M9 14h4" />
              <path className="b" d="M12 18c2-3 7-3 10 0-3 3-8 3-10 0z" />
              <circle cx="17" cy="18" r="1.5" fill="#2b7de9" stroke="none" />
            </PaletteIcon>
          </Palette>
        </CanvasBox>

        <RightPanel>
          <PanelHead />
          <RightTop>
            <RightTabEdge />
          </RightTop>
          <VisTable>
            <VisRow>
              <VisCell>构件图元</VisCell>
              <VisCell>显示图元</VisCell>
              <VisCell>显示名称</VisCell>
            </VisRow>
            {vis.map(([t, depth, kind, a, b], i) => (
              <VisRow key={i}>
                <VisName $depth={depth}>
                  {kind === "toggle" && <Toggle $depth={depth} />}
                  {kind !== "toggle" && <Branch $last={kind === "end"} />}
                  {t}
                </VisName>
                <CheckCell k={a} />
                <CheckCell k={b} />
              </VisRow>
            ))}
          </VisTable>
        </RightPanel>
      </Workspace>
    </Main>

    <Menu>
      <MenuItem><Icon n="reBeam" />重提梁跨</MenuItem>
      <MenuItem $on><Icon n="setSup" />设置支座</MenuItem>
      <MenuItem><Icon n="delSup" />删除支座</MenuItem>
    </Menu>
    <Tooltip>
      <TipTitle>设置支座 (SZZ)</TipTitle>
      <TipText>对梁支座进行添加操作</TipText>
      <TipRule />
      <TipBold>适用构件：梁、主肋梁、次肋<br />梁、基础梁</TipBold>
    </Tooltip>
  </Root>
);

export default App;
